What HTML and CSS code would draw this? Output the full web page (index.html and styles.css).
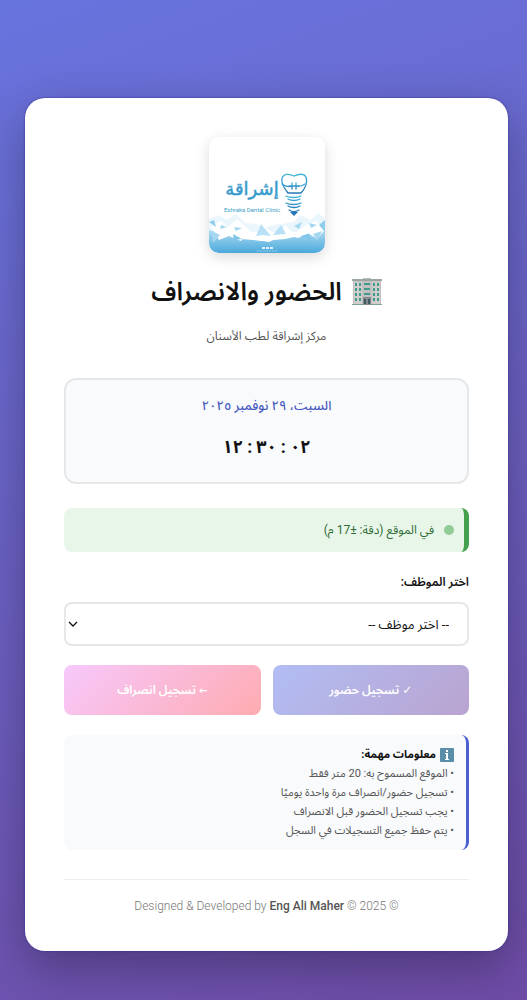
FILE: index.html
```html
<!doctype html>
<html lang="ar" dir="rtl">
<head>
<meta charset="UTF-8">
<meta name="viewport" content="width=device-width, initial-scale=1">
<title>الحضور والانصراف</title>
<link rel="stylesheet" href="styles.css">
</head>
<body>
<main class="container">
	<header class="header">
		<svg class="logo" viewBox="0 0 116 116" role="img" aria-label="إشراقة">
			<defs>
				<linearGradient id="sea" x1="0" y1="0" x2="0" y2="1">
					<stop offset="0" stop-color="#b5def4"/>
					<stop offset="1" stop-color="#4aa9db"/>
				</linearGradient>
				<linearGradient id="ink" x1="0" y1="0" x2="0" y2="1">
					<stop offset="0" stop-color="#45b5dc"/>
					<stop offset="1" stop-color="#2577b5"/>
				</linearGradient>
			</defs>
			<rect width="116" height="116" fill="#fff"/>
			<path d="M0 82l10-4 8 5 9-6 9 9 11 1 8 4 9-3 9-1 12-2 6-7 11 5 7-7 7 5v14H0z" fill="#eaf6fc"/>
			<path d="M0 93l14 4 18 5 22 2 22-2 18-4 22-6v24H0z" fill="url(#sea)"/>
			<path d="M2 90l9-6 8 6 9-8 10 9 8 9-10-2-4 6-12-5-10 4zM68 101l8-13 9 9 12-9 10-4 8 10-7 8-9-6-10 5-10-3zM48 98l8-8 14 10-10 5-12-2z" fill="#fff"/>
			<path d="M3 94l8 4-7 8zM12 88l6 2-7 2zM25 90l8 1-6 3zM85 89l8-4-3 7zM100 86l8 2-6 3zM104 97l9-3-5 10z" fill="#a5d7f0"/>
			<path d="M47 99l5-12 10 12-8-1zM64 98l8-10 5 9z" fill="#b9e1f5"/>
			<path d="M0 85l5-2 2 7zM110 88l6-5v12z" fill="#8fcdec"/>
			<path d="M24 97l9 5-8 1zM92 99l8-2 2 6z" fill="#7fc5e9"/>
			<text class="logo-name" x="43" y="58" direction="rtl">إشراقة</text>
			<text class="logo-sub" x="43" y="75" direction="ltr">Eshraka Dental Clinic</text>
			<g fill="none" stroke="url(#ink)" stroke-width="1.3" stroke-linecap="round" stroke-linejoin="round">
				<path d="M79 56c-4-5-7-11-6-15 2-5 8-4 12-2 4-2 10-3 12 1 2 5-1 12-5 16z"/>
				<path d="M73 47c4 3 7 3 10 2m4 0c3 1 6 0 9-2M83 46v6m4-6v6M80 49h10"/>
				<path d="M77 59c4 2 11 2 15 0M79 62c4 2 8 2 12 0M77 66c4 2 11 2 15 0M79 69c3 2 9 2 12 0M80 73c3 2 7 2 10 0"/>
			</g>
			<path d="M81 75h8l-4 4z" fill="#2577b5"/>
			<path d="M53 110h3v2h-3zm4 0h3v2h-3zm4 0h3v2h-3z" fill="#fff" opacity=".8"/>
			<path d="M48 114h20" stroke="#fff" stroke-width="1" stroke-dasharray="2 1" opacity=".4"/>
		</svg>
		<h1 class="title">
			<svg class="building" viewBox="0 0 30 30" aria-hidden="true">
				<path d="M11 1h8v3h-8z" fill="#b9bdbb"/>
				<path d="M1 3h28v25H1z" fill="#bfc0bf"/>
				<path d="M0 2h30v2H0z" fill="#9ba5a2"/>
				<path d="M2 5h8v22H2zM20 5h8v22h-8z" fill="#d0cecd"/>
				<path d="M3 6h2v3H3zm4 0h2v3H7zm5 0h6v2h-6zm9 0h2v3h-2zm4 0h2v3h-2zM3 11h2v3H3zm4 0h2v3H7zm5 0h6v2h-6zm9 0h2v3h-2zm4 0h2v3h-2zM3 16h2v3H3zm4 0h2v3H7zm5 0h6v2h-6zm9 0h2v3h-2zm4 0h2v3h-2zM3 21h2v3H3zm4 0h2v3H7zm14 0h2v3h-2zm4 0h2v3h-2z" fill="#3f9a8b"/>
				<path d="M11 20h8v8h-8z" fill="#858b8c"/>
				<path d="M12 22h2v5h-2zm4 0h2v5h-2z" fill="#3c5a60"/>
				<path d="M0 27h11v1H0zM19 27h11v1H19z" fill="#7da298"/>
			</svg>
			الحضور والانصراف
		</h1>
		<p class="subtitle">مركز إشراقة لطب الأسنان</p>
	</header>

	<section class="datetime">
		<div class="date">السبت، ٢٩ نوفمبر ٢٠٢٥</div>
		<div class="time"><span>١٢</span><span>:</span><span>٣٠</span><span>:</span><span>٠٢</span></div>
	</section>

	<div class="status">
		<span class="status-dot"></span>
		<span>في الموقع (دقة: ±17 م)</span>
	</div>

	<form class="form">
		<label class="label" for="employee">اختر الموظف:</label>
		<div class="select-wrap">
			<select class="select" id="employee">
				<option>-- اختر موظف --</option>
			</select>
			<svg class="chevron" viewBox="0 0 10 10" aria-hidden="true"><path d="M1 3l4 4 4-4" fill="none" stroke="#111" stroke-width="1.3"/></svg>
		</div>
		<div class="buttons">
			<button class="btn btn-in" type="button" disabled>✓ تسجيل حضور</button>
			<button class="btn btn-out" type="button" disabled><span class="arrow">←</span> تسجيل انصراف</button>
		</div>
	</form>

	<section class="info">
		<h2 class="info-title">
			<svg class="info-icon" viewBox="0 0 14 14" aria-hidden="true">
				<rect width="14" height="14" rx="1" fill="#598da8"/>
				<path d="M6 2h2v2H6zM5 5h3v6h1v1H5v-1h1V6H5z" fill="#fff"/>
			</svg>
			معلومات مهمة:
		</h2>
		<p>• الموقع المسموح به: 20 متر فقط</p>
		<p>• تسجيل حضور/انصراف مرة واحدة يوميًا</p>
		<p>• يجب تسجيل الحضور قبل الانصراف</p>
		<p>• يتم حفظ جميع التسجيلات في السجل</p>
	</section>

	<footer class="footer" dir="ltr">Designed &amp; Developed by <strong>Eng Ali Maher</strong> © 2025 ©</footer>
</main>
</body>
</html>
```

FILE: styles.css
```css
*{margin:0;padding:0;box-sizing:border-box;}
body{
	min-height:100vh;
	padding:98px 19px 49px 25px;
	font-family:Roboto,"Noto Sans Arabic","Noto Sans","DejaVu Sans",sans-serif;
	color:#111;
	background:linear-gradient(160deg,#6874de 0%,#6e4ca6 100%);
}
.container{
	max-width:500px;
	margin:0 auto;
	padding:39px 39px 35px;
	background:#fff;
	border-radius:20px;
	box-shadow:0 0 2px #2f2488,0 16px 48px rgba(0,0,0,.3);
}

.header{text-align:center;margin-bottom:32px;}
.logo{
	display:block;
	width:116px;
	height:116px;
	margin:0 auto 20px;
	border-radius:10px;
	box-shadow:0 4px 14px rgba(0,0,0,.15);
}
.logo-name{font:18px "DejaVu Sans",sans-serif;fill:#389bcd;stroke:#389bcd;stroke-width:.5px;text-anchor:middle;}
.logo-sub{font:6px Roboto,sans-serif;fill:#3c9fc9;text-anchor:middle;}
.title{
	display:flex;
	justify-content:center;
	align-items:center;
	gap:10px;
	font-size:25px;
	line-height:38px;
	font-weight:600;
	margin-bottom:15px;
}
.building{width:30px;height:30px;}
.subtitle{font-size:12px;line-height:20px;color:#555;}

.datetime{
	padding:15px 16px 17px;
	margin-bottom:24px;
	text-align:center;
	background:#f8fafc;
	border:2px solid #e5e7e9;
	border-radius:12px;
}
.date{font-size:13px;line-height:22px;font-weight:500;color:#4a5bc0;margin-bottom:12px;}
.time{
	display:flex;
	justify-content:center;
	gap:4px;
	direction:ltr;
	font-size:18px;
	line-height:36px;
	font-weight:700;
}

.status{
	display:flex;
	align-items:center;
	gap:10px;
	min-height:44px;
	padding:8px 10px;
	margin-bottom:20px;
	font-size:12px;
	line-height:20px;
	color:#2e6b34;
	background:#e8f6e9;
	border-right:5px solid #43a04c;
	border-radius:8px;
}
.status-dot{width:10px;height:10px;border-radius:50%;background:#91cc94;}

.label{display:block;margin-bottom:10px;font-size:12px;line-height:20px;font-weight:600;}
.select-wrap{position:relative;}
.select{
	display:block;
	appearance:none;
	width:100%;
	height:44px;
	padding:0 18px;
	font-family:inherit;
	font-size:13px;
	color:#111;
	background:#fff;
	border:2px solid #e5e7e9;
	border-radius:8px;
}
.chevron{
	position:absolute;
	left:4px;
	top:17px;
	width:10px;
	height:10px;
	pointer-events:none;
}
.buttons{display:grid;grid-template-columns:1fr 1fr;gap:12px;margin:19px 0 20px;}
.btn{
	height:50px;
	border:0;
	border-radius:8px;
	font-family:inherit;
	font-size:12px;
	font-weight:600;
	color:#fff;
	opacity:.5;
}
.arrow{font-size:10px;}
.btn-in{background:linear-gradient(135deg,#667eea,#764ba2);}
.btn-out{background:linear-gradient(135deg,#f093fb,#ff5a64);}

.info{
	padding:10px 12px;
	margin-bottom:29px;
	font-size:11px;
	line-height:19px;
	color:#555;
	background:#f8fafc;
	border-right:3px solid #4a5fd0;
	border-radius:8px;
}
.info-title{display:flex;align-items:center;gap:4px;font-size:11px;line-height:19px;color:#111;}
.info-icon{width:14px;height:14px;}

.footer{
	padding-top:16px;
	text-align:center;
	font-size:12px;
	font-weight:300;
	line-height:20px;
	color:#777;
	border-top:1px solid #eee;
}
.footer strong{font-weight:500;color:#555;}
```
